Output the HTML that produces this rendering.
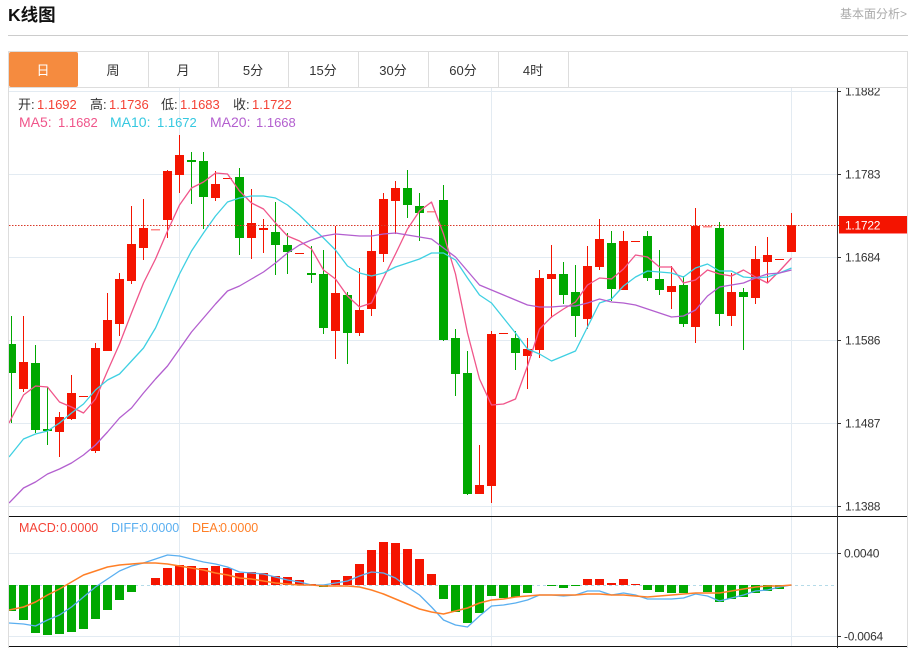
<!DOCTYPE html>
<html lang="zh"><head><meta charset="utf-8"><title>K线图</title>
<style>
html,body{margin:0;padding:0;background:#fff;width:915px;height:648px;overflow:hidden}
svg{display:block;position:absolute;left:0;top:0}
text{font-family:"Liberation Sans","Noto Sans CJK SC",sans-serif}
</style></head><body>
<svg width="915" height="648" viewBox="0 0 915 648" xmlns="http://www.w3.org/2000/svg">
<defs><clipPath id="c"><rect x="9" y="88" width="829" height="560"/></clipPath></defs>
<rect width="915" height="648" fill="#fff"/>
<!-- grid -->
<path d="M9 91.5H838M9 174.5H838M9 257.5H838M9 340.5H838M9 423.5H838M9 506.5H838M9 553.5H838M9 636.5H838M179.5 88V646M491.5 88V646M791.5 88V646" stroke="#e3ebf2" stroke-width="1" fill="none"/>
<path d="M9 585.5H834" stroke="#b5dbe8" stroke-width="1" stroke-dasharray="3 3" fill="none"/>
<g clip-path="url(#c)">
<!-- red wicks -->
<path stroke="#f41400" stroke-width="1" fill="none" d="M23.5 316V392M59.5 412V457M71.5 375V420M95.5 343V453M107.5 293V351M119.5 273V336M131.5 206V284M143.5 199V260M167.5 170V238M179.5 135V193M215.5 171V201M251.5 189V259M263.5 219V253M335.5 226V359M359.5 268V336M371.5 230V316M383.5 193V262M395.5 181V234M479.5 445V494M491.5 331V503M527.5 338V389M539.5 270V358M551.5 245V318M587.5 246V329M599.5 219V270M623.5 231V290M671.5 266V309M695.5 208V343M731.5 273V326M755.5 246V304M767.5 237V283M791.5 213V252"/>
<!-- green wicks -->
<path stroke="#00a800" stroke-width="1" fill="none" d="M11.5 316V423M35.5 345V433M47.5 387V445M191.5 152V204M203.5 152V229M239.5 168V255M275.5 202V275M287.5 233V274M311.5 246V283M323.5 250V334M347.5 292V364M407.5 170V218M419.5 193V241M443.5 185V341M455.5 329V396M467.5 351V495M515.5 331V370M563.5 262V304M575.5 265V337M611.5 231V301M647.5 231V281M659.5 250V295M683.5 276V327M719.5 222V326M743.5 288V350"/>
<!-- red bodies -->
<path fill="#f41400" d="M19 362h9v27h-9zM55 417h9v15h-9zM67 393h9v26h-9zM79 396h9v1h-9zM91 348h9v103h-9zM103 320h9v31h-9zM115 279h9v45h-9zM127 244h9v37h-9zM139 228h9v20h-9zM163 171h9v49h-9zM175 155h9v20h-9zM211 184h9v14h-9zM223 178h9v1h-9zM247 223h9v15h-9zM259 228h9v2h-9zM295 253h9v1h-9zM331 293h9v38h-9zM355 310h9v23h-9zM367 251h9v58h-9zM379 199h9v55h-9zM391 188h9v13h-9zM475 485h9v9h-9zM487 334h9v152h-9zM499 333h9v1h-9zM523 349h9v7h-9zM535 278h9v72h-9zM547 274h9v5h-9zM583 266h9v53h-9zM595 239h9v28h-9zM619 241h9v49h-9zM631 241h9v1h-9zM667 286h9v6h-9zM691 226h9v101h-9zM727 292h9v24h-9zM751 259h9v39h-9zM763 255h9v7h-9zM775 259h9v1h-9zM787 225h9v27h-9z"/>
<path fill="#f88" d="M151 229h9v1.5h-9zM427 211h9v1.5h-9zM703 226h9v1.5h-9z"/>
<!-- green bodies -->
<path fill="#00a800" d="M7 344h9v29h-9zM31 363h9v67h-9zM43 429h9v2h-9zM187 160h9v2h-9zM199 161h9v36h-9zM235 177h9v61h-9zM271 232h9v13h-9zM283 245h9v7h-9zM307 273h9v2h-9zM319 274h9v54h-9zM343 295h9v38h-9zM403 188h9v17h-9zM415 206h9v7h-9zM439 200h9v140h-9zM451 338h9v36h-9zM463 373h9v121h-9zM511 338h9v15h-9zM559 274h9v21h-9zM571 292h9v24h-9zM607 243h9v46h-9zM643 236h9v42h-9zM655 279h9v11h-9zM679 285h9v39h-9zM715 228h9v86h-9zM739 292h9v5h-9z"/>
<!-- MACD bars red -->
<path fill="#f41400" d="M151 578h9v7h-9zM163 568h9v17h-9zM175 565h9v20h-9zM187 566h9v19h-9zM199 568h9v17h-9zM211 566h9v19h-9zM223 568h9v17h-9zM235 573h9v12h-9zM247 572h9v13h-9zM259 573h9v12h-9zM271 576h9v9h-9zM283 577h9v8h-9zM295 580h9v5h-9zM307 584h9v1h-9zM331 580h9v5h-9zM343 576h9v9h-9zM355 564h9v21h-9zM367 550h9v35h-9zM379 542h9v43h-9zM391 543h9v42h-9zM403 549h9v36h-9zM415 559h9v26h-9zM427 574h9v11h-9zM583 579h9v6h-9zM595 579h9v6h-9zM607 583h9v2h-9zM619 579h9v6h-9zM631 584h9v1h-9z"/>
<!-- MACD bars green -->
<path fill="#00a800" d="M7 585h9v26h-9zM19 585h9v35h-9zM31 585h9v48h-9zM43 585h9v50h-9zM55 585h9v49h-9zM67 585h9v47h-9zM79 585h9v44h-9zM91 585h9v34h-9zM103 585h9v25h-9zM115 585h9v15h-9zM127 585h9v7h-9zM319 585h9v2h-9zM439 585h9v14h-9zM451 585h9v27h-9zM463 585h9v38h-9zM475 585h9v28h-9zM487 585h9v11h-9zM499 585h9v13h-9zM511 585h9v12h-9zM523 585h9v8h-9zM547 585h9v1h-9zM559 585h9v3h-9zM571 585h9v1h-9zM643 585h9v5h-9zM655 585h9v7h-9zM667 585h9v8h-9zM679 585h9v8h-9zM703 585h9v7h-9zM715 585h9v17h-9zM727 585h9v14h-9zM739 585h9v12h-9zM751 585h9v8h-9zM763 585h9v6h-9zM775 585h9v4h-9z"/>
<g fill="none" stroke-width="1.3" stroke-linejoin="round">
<polyline stroke="#f0558a" points="9,423 23.5,395 35.5,386 47.5,387 59.5,402 71.5,407 83.5,413 95.5,399 107.5,371 119.5,344 131.5,313 143.5,283 155.5,259 167.5,231 179.5,205 191.5,188 203.5,182 215.5,173 227.5,174 239.5,191 251.5,203 263.5,209 275.5,223 287.5,236 299.5,241 311.5,249 323.5,270 335.5,279 347.5,296 359.5,307 371.5,303 383.5,278 395.5,254 407.5,229 419.5,211 431.5,202 443.5,234 455.5,274 467.5,333 479.5,379 491.5,405 503.5,404 515.5,399 527.5,366 539.5,329 551.5,317 563.5,309 575.5,302 587.5,285 599.5,278 611.5,279 623.5,269 635.5,255 647.5,257 659.5,267 671.5,267 683.5,283 695.5,280 707.5,270 719.5,274 731.5,276 743.5,270 755.5,277 767.5,283 779.5,271 791.5,258"/>
<polyline stroke="#3fd0e2" points="9,457 23.5,439 35.5,434 47.5,431 59.5,423 71.5,413 83.5,404 95.5,390 107.5,380 119.5,374 131.5,361 143.5,348 155.5,328 167.5,301 179.5,274 191.5,251 203.5,233 215.5,216 227.5,202 239.5,198 251.5,196 263.5,196 275.5,198 287.5,205 299.5,215 311.5,227 323.5,238 335.5,250 347.5,266 359.5,273 371.5,276 383.5,273 395.5,267 407.5,263 419.5,259 431.5,253 443.5,253 455.5,260 467.5,278 479.5,295 491.5,303 503.5,318 515.5,333 527.5,349 539.5,354 551.5,361 563.5,356 575.5,351 587.5,327 599.5,303 611.5,299 623.5,286 635.5,277 647.5,271 659.5,272 671.5,273 683.5,277 695.5,268 707.5,264 719.5,271 731.5,271 743.5,277 755.5,278 767.5,277 779.5,273 791.5,268"/>
<polyline stroke="#b35fcf" points="9,503 23.5,488 35.5,482 47.5,474 59.5,469 71.5,463 83.5,455 95.5,445 107.5,432 119.5,418 131.5,408 143.5,393 155.5,379 167.5,366 179.5,349 191.5,332 203.5,318 215.5,304 227.5,291 239.5,286 251.5,279 263.5,272 275.5,263 287.5,253 299.5,245 311.5,240 323.5,236 335.5,234 347.5,235 359.5,236 371.5,236 383.5,234 395.5,233 407.5,235 419.5,237 431.5,239 443.5,248 455.5,257 467.5,271 479.5,285 491.5,290 503.5,295 515.5,300 527.5,305 539.5,307 551.5,307 563.5,306 575.5,306 587.5,303 599.5,299 611.5,302 623.5,303 635.5,305 647.5,309 659.5,313 671.5,317 683.5,316 695.5,310 707.5,296 719.5,287 731.5,285 743.5,283 755.5,278 767.5,274 779.5,273 791.5,270"/>
<polyline stroke="#5aaff0" points="9,623 23.5,624 35.5,626 47.5,620 59.5,615 71.5,607 83.5,597 95.5,587 107.5,579 119.5,571 131.5,566 143.5,563 155.5,559 167.5,555 179.5,556 191.5,559 203.5,562 215.5,564 227.5,567 239.5,572 251.5,573 263.5,574 275.5,577 287.5,580 299.5,582 311.5,585 323.5,585 335.5,583 347.5,581 359.5,576 371.5,572 383.5,573 395.5,578 407.5,587 419.5,595 431.5,607 443.5,620 455.5,625 467.5,627 479.5,616 491.5,606 503.5,605 515.5,603 527.5,600 539.5,595 551.5,595 563.5,596 575.5,595 587.5,591 599.5,591 611.5,595 623.5,593 635.5,595 647.5,599 659.5,599 671.5,599 683.5,598 695.5,594 707.5,596 719.5,601 731.5,598 743.5,595 755.5,591 767.5,590 779.5,587 791.5,585"/>
<polyline stroke="#ff7f27" stroke-width="1.5" points="9,610 23.5,607 35.5,602 47.5,595 59.5,589 71.5,582 83.5,575 95.5,571 107.5,567 119.5,565 131.5,564 143.5,563 155.5,563 167.5,564 179.5,566 191.5,568 203.5,570 215.5,573 227.5,575 239.5,578 251.5,579 263.5,581 275.5,583 287.5,584 299.5,585 311.5,585 323.5,586 335.5,586 347.5,586 359.5,587 371.5,590 383.5,594 395.5,599 407.5,604 419.5,609 431.5,612 443.5,614 455.5,611 467.5,608 479.5,603 491.5,600 503.5,599 515.5,597 527.5,596 539.5,595 551.5,595 563.5,595 575.5,595 587.5,594 599.5,594 611.5,595 623.5,595 635.5,596 647.5,597 659.5,596 671.5,595 683.5,594 695.5,593 707.5,593 719.5,593 731.5,591 743.5,589 755.5,587 767.5,586 779.5,586 791.5,585"/>
</g>
</g>
<!-- current price line -->
<path d="M9 225.5H838" stroke="#d93a2a" stroke-width="1" stroke-dasharray="1.5 1.5" fill="none"/>
<!-- frame lines -->
<path d="M9 516.5H907M9 646.5H907" stroke="#111" stroke-width="1" fill="none"/>
<path d="M8.5 51V648M907.5 51V648" stroke="#ddd" stroke-width="1" fill="none"/>
<path d="M837.5 88V648" stroke="#333" stroke-width="1" fill="none"/>
<path d="M838 91.5h3M838 174.5h3M838 257.5h3M838 340.5h3M838 423.5h3M838 506.5h3M838 553.5h3M838 636.5h3" stroke="#333" stroke-width="1" fill="none"/>
<!-- axis labels -->
<g font-size="12" fill="#333" letter-spacing="-.25">
<text x="845" y="95.5">1.1882</text>
<text x="845" y="178.5">1.1783</text>
<text x="845" y="261.5">1.1684</text>
<text x="845" y="344.5">1.1586</text>
<text x="845" y="427.5">1.1487</text>
<text x="845" y="510.5">1.1388</text>
<text x="844" y="557.5">0.0040</text>
<text x="844" y="640.5">-0.0064</text>
</g>
<rect x="839" y="216" width="68" height="18" fill="#f41400"/>
<rect x="839" y="233" width="68" height="1" fill="#f88"/>
<path d="M838 225.5h3" stroke="#f41400"/>
<text x="845" y="229.5" font-size="12" fill="#fff" letter-spacing="-.25">1.1722</text>
<!-- header cover -->
<rect x="0" y="0" width="915" height="88" fill="#fff"/>
<text x="8" y="21" font-size="17.5" font-weight="bold" fill="#111">K线图</text>
<text x="907" y="18" font-size="12" fill="#aaa" text-anchor="end">基本面分析&gt;</text>
<path d="M8 35.5H908" stroke="#ccc" stroke-width="1" fill="none"/>
<!-- tabs -->
<path d="M8.5 51.5H907.5V87.5H8.5Z" fill="#fff" stroke="#ddd" stroke-width="1"/>
<path d="M148.5 52V87M218.5 52V87M288.5 52V87M358.5 52V87M428.5 52V87M498.5 52V87M568.5 52V87" stroke="#ddd" stroke-width="1" fill="none"/>
<rect x="9" y="52" width="69" height="35" rx="2" fill="#f58b3f"/>
<g font-size="13" text-anchor="middle" fill="#333">
<text x="43" y="75" fill="#fff">日</text>
<text x="113" y="75">周</text>
<text x="183" y="75">月</text>
<text x="253" y="75">5分</text>
<text x="323" y="75">15分</text>
<text x="393" y="75">30分</text>
<text x="463" y="75">60分</text>
<text x="533" y="75">4时</text>
</g>
<!-- legend -->
<g font-size="13">
<text x="18" y="109" fill="#333">开:</text><text x="37" y="109" fill="#f44336">1.1692</text>
<text x="90" y="109" fill="#333">高:</text><text x="109" y="109" fill="#f44336">1.1736</text>
<text x="161" y="109" fill="#333">低:</text><text x="180" y="109" fill="#f44336">1.1683</text>
<text x="233" y="109" fill="#333">收:</text><text x="252" y="109" fill="#f44336">1.1722</text>
<text x="19" y="127" fill="#f0558a" font-size="14">MA5:</text><text x="58" y="127" fill="#f0558a">1.1682</text>
<text x="110" y="127" fill="#35c8e0" font-size="14">MA10:</text><text x="157" y="127" fill="#35c8e0">1.1672</text>
<text x="210" y="127" fill="#b35fcf" font-size="14">MA20:</text><text x="256" y="127" fill="#b35fcf">1.1668</text>
<text x="19" y="532" fill="#f44336" font-size="12.5">MACD:</text><text x="60" y="532" fill="#f44336" font-size="12.5">0.0000</text>
<text x="111" y="532" fill="#5aaff0" font-size="12.5">DIFF:</text><text x="141" y="532" fill="#5aaff0" font-size="12.5">0.0000</text>
<text x="192" y="532" fill="#ff7f27" font-size="12.5">DEA:</text><text x="220" y="532" fill="#ff7f27" font-size="12.5">0.0000</text>
</g>
</svg>
</body></html>
